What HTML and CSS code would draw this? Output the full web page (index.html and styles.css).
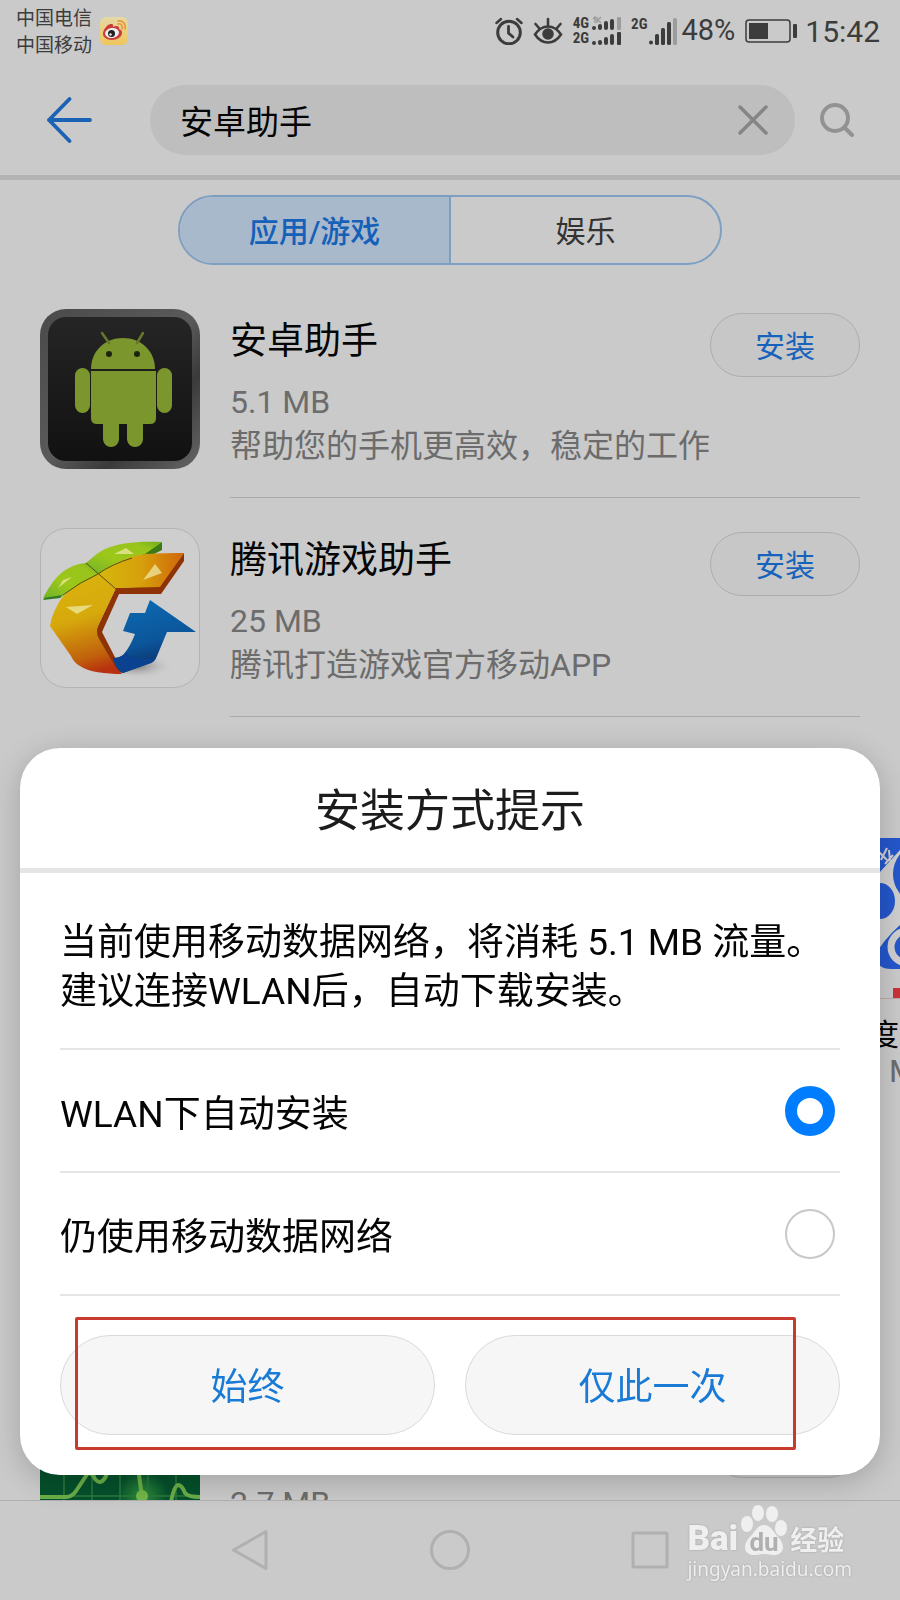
FILE: index.html
```html
<!DOCTYPE html>
<html lang="zh-CN">
<head>
    <meta charset="UTF-8">
    <meta name="viewport" content="width=device-width, initial-scale=1.0">
    <title>安卓助手</title>
    <link rel="stylesheet" href="styles.css">
</head>
<body>

<div class="screen">
    <!-- Status bar -->
    <div class="statusbar">
        <div class="carriers">
            <span>中国电信</span>
            <span>中国移动</span>
        </div>
        <svg class="weibo" width="28" height="28" viewBox="0 0 28 28">
            <defs>
                <linearGradient id="gold" x1="0" y1="0" x2="0" y2="1">
                    <stop offset="0" stop-color="#e6d9a6"/>
                    <stop offset="1" stop-color="#efc65a"/>
                </linearGradient>
            </defs>
            <rect width="28" height="28" rx="6" fill="url(#gold)"/>
            <path d="M3 17C3 12 8 7 11 7C14 7 13 9 13 10C16 8 20 9 19 12C22 13 22 15 22 16C22 20 17 23 12 23C7 23 3 20 3 17Z" fill="#c93c3a"/>
            <ellipse cx="12" cy="16" rx="7" ry="5" fill="#eee" transform="rotate(-8 12 16)"/>
            <circle cx="11.500" cy="16.500" r="3.500" fill="#222"/>
            <circle cx="10.500" cy="17.500" r="1.200" fill="#eee"/>
            <path d="M18 7C21 6 23 9 22 12M18 4C23 3 26 7 25 12" fill="none" stroke="#e39a3c" stroke-width="1.600" stroke-linecap="round"/>
        </svg>
        <div class="indicators">
            <svg width="28" height="28" viewBox="0 0 28 28" fill="none" stroke="#3c3c3c" stroke-width="3" stroke-linecap="round">
                <circle cx="14" cy="15.500" r="11.300"/>
                <path d="M13.500 9.500V16L18 20" stroke-width="2.800"/>
                <path d="M1.500 6L6 2M26.500 6L22 2" stroke-width="2.500"/>
            </svg>
            <svg width="30" height="28" viewBox="0 0 30 28" fill="none" stroke="#3c3c3c" stroke-width="2.600" stroke-linecap="round">
                <path d="M2 17.500C6 11.500 10 9.500 15 9.500S24 11.500 28 17.500C24 23.500 20 25.500 15 25.500S6 23.500 2 17.500Z"/>
                <circle cx="15" cy="17" r="4.500" fill="#3c3c3c"/>
                <path d="M15 2V8M2.500 7L6 11M27.500 7L24 11"/>
            </svg>
            <div class="sim">
                <div class="net"><span>4G</span><span>2G</span></div>
                <svg width="30" height="30" viewBox="0 0 30 30" fill="#3c3c3c">
                    <path d="M2 3L4 1V7M6 1V7M10 1L7 4L10 7" fill="none" stroke="#9c9c9c" stroke-width="1.500"/>
                    <circle cx="3" cy="12" r="2"/>
                    <rect x="7" y="8" width="4" height="6" rx="2"/>
                    <rect x="13" y="5" width="4" height="9" rx="2"/>
                    <rect x="19" y="3" width="4" height="11" rx="2"/>
                    <rect x="26" y="1" width="4" height="13" rx="1" fill="#9c9c9c"/>
                    <circle cx="3" cy="27" r="2"/>
                    <rect x="7" y="24" width="4" height="5" rx="2"/>
                    <rect x="13" y="21" width="4" height="8" rx="2"/>
                    <rect x="19" y="18" width="4" height="11" rx="2"/>
                    <rect x="26" y="16" width="4" height="13" rx="1"/>
                </svg>
            </div>
            <div class="sim second">
                <div class="net"><span>2G</span></div>
                <svg width="28" height="28" viewBox="0 0 28 28" fill="#3c3c3c">
                    <circle cx="2" cy="25.500" r="2"/>
                    <rect x="6" y="17" width="4" height="11" rx="1.500"/>
                    <rect x="12" y="11" width="4" height="17" rx="1.500"/>
                    <rect x="18" y="5" width="4" height="23" rx="1.500"/>
                    <rect x="24" y="1" width="4" height="27" rx="1.500" fill="#9c9c9c"/>
                </svg>
            </div>
            <span class="percent">48%</span>
            <svg class="battery" width="52" height="24" viewBox="0 0 52 24">
                <rect x="1" y="1" width="44" height="22" rx="3" fill="none" stroke="#3c3c3c" stroke-width="1.500"/>
                <rect x="4" y="4" width="19" height="16" fill="#3c3c3c"/>
                <rect x="48" y="5" width="4" height="14" rx="1" fill="#3c3c3c"/>
            </svg>
            <span class="clock">15:42</span>
        </div>
    </div>

    <!-- Search bar -->
    <header class="topbar">
        <button class="icon-btn" aria-label="返回">
            <svg width="45" height="46" viewBox="0 0 45 46" fill="none" stroke="#1a62b5" stroke-width="3.800" stroke-linecap="round" stroke-linejoin="round">
                <path d="M22.500 2L2 23L22.500 44M2 23H43"/>
            </svg>
        </button>
        <div class="search">
            <input type="text" value="安卓助手" aria-label="搜索">
            <button class="icon-btn" aria-label="清除">
                <svg width="30" height="30" viewBox="0 0 30 30" fill="none" stroke="#858585" stroke-width="3.500" stroke-linecap="round">
                    <path d="M2 2L28 28M28 2L2 28"/>
                </svg>
            </button>
        </div>
        <button class="icon-btn" aria-label="搜索">
            <svg width="34" height="34" viewBox="0 0 34 34" fill="none" stroke="#929292" stroke-width="4" stroke-linecap="round">
                <circle cx="15" cy="15" r="13"/>
                <path d="M24.500 24.500L32 32"/>
            </svg>
        </button>
    </header>

    <main class="content">
        <div class="tabs">
            <button class="tab active">应用/游戏</button>
            <button class="tab">娱乐</button>
        </div>

        <article class="app">
            <svg class="app-icon" width="160" height="160" viewBox="0 0 160 160">
                <defs>
                    <linearGradient id="frame" x1="0" y1="0" x2="1" y2="1">
                        <stop offset="0" stop-color="#4a4a4a"/>
                        <stop offset="0.500" stop-color="#5a5a5a"/>
                        <stop offset="0.700" stop-color="#3a3a3a"/>
                        <stop offset="1" stop-color="#666"/>
                    </linearGradient>
                    <linearGradient id="dark" x1="0" y1="0" x2="0" y2="1">
                        <stop offset="0" stop-color="#252525"/>
                        <stop offset="1" stop-color="#111"/>
                    </linearGradient>
                </defs>
                <rect width="160" height="160" rx="26" fill="url(#frame)"/>
                <rect x="8" y="8" width="144" height="144" rx="18" fill="url(#dark)"/>
                <g fill="#7b962c">
                    <path d="M51 60C51 42 65 29 83 29S115 42 115 60Z"/>
                    <path d="M51 62H116V109Q116 115 110 115H57Q51 115 51 109Z"/>
                    <rect x="35" y="59" width="15" height="45" rx="7.500"/>
                    <rect x="117" y="59" width="15" height="45" rx="7.500"/>
                    <path d="M63 110H79V130A8 8 0 0 1 63 130Z"/>
                    <path d="M87 110H103V130A8 8 0 0 1 87 130Z"/>
                </g>
                <path d="M62 24L69 34M103 24L97 34" stroke="#64792a" stroke-width="2.500" stroke-linecap="round"/>
                <circle cx="69" cy="45" r="3" fill="#1c2410"/>
                <circle cx="97" cy="45" r="3" fill="#1c2410"/>
            </svg>
            <div class="app-body">
                <div class="app-text">
                    <h2>安卓助手</h2>
                    <p>5.1 MB</p>
                    <p>帮助您的手机更高效，稳定的工作</p>
                </div>
                <button class="install">安装</button>
            </div>
        </article>

        <article class="app">
            <svg class="app-icon" width="160" height="160" viewBox="0 0 160 160">
                <defs>
                    <linearGradient id="green" x1="0" y1="1" x2="1" y2="0">
                        <stop offset="0" stop-color="#6db32a"/>
                        <stop offset="0.400" stop-color="#9cc71a"/>
                        <stop offset="0.800" stop-color="#98c41c"/>
                        <stop offset="1" stop-color="#6cab1c"/>
                    </linearGradient>
                    <linearGradient id="amber" x1="0" y1="0" x2="1" y2="0">
                        <stop offset="0" stop-color="#d6b80c"/>
                        <stop offset="0.500" stop-color="#d6a00c"/>
                        <stop offset="1" stop-color="#d0660a"/>
                    </linearGradient>
                    <linearGradient id="fire" x1="0.300" y1="0" x2="0.500" y2="1">
                        <stop offset="0" stop-color="#d9b40e"/>
                        <stop offset="0.450" stop-color="#d6a80c"/>
                        <stop offset="0.850" stop-color="#c0600c"/>
                        <stop offset="1" stop-color="#b83210"/>
                    </linearGradient>
                    <linearGradient id="blue" x1="0" y1="0" x2="0.300" y2="1">
                        <stop offset="0" stop-color="#0b6cb4"/>
                        <stop offset="0.650" stop-color="#0c559a"/>
                        <stop offset="1" stop-color="#0a2f68"/>
                    </linearGradient>
                    <radialGradient id="shade">
                        <stop offset="0" stop-color="#777"/>
                        <stop offset="1" stop-color="#cecece" stop-opacity="0"/>
                    </radialGradient>
                </defs>
                <rect x="0.500" y="0.500" width="159" height="159" rx="26" fill="#cecece" stroke="#b2b2b2"/>
                <ellipse cx="96" cy="138" rx="38" ry="13" fill="url(#shade)"/>
                <path d="M3 72L20 70L24 66L5 69Z" fill="#2f7a1c"/>
                <path d="M3 70C8 61 12 54 18 48C26 40 35 36 46 35L58 46L23 67Z" fill="url(#green)"/>
                <path d="M122 14V22L112 27H102Z" fill="#3c7a14"/>
                <path d="M46 35C52 30 56 26 63 22C80 14 100 13 122 14L105 26C92 28 74 35 58 46Z" fill="url(#green)"/>
                <path d="M144 25V33L121 66H79L62 104L81 141L82 145L74 143L57 110V100L76 60L119 58Z" fill="#8e3208"/>
                <path d="M58 46C76 34 92 27 106 26C118 25 132 25 144 25L120 59L76 60Z" fill="url(#amber)"/>
                <path d="M58 46L76 60L58 98Q56 103 58 109L76 140L82 146C66 146 48 144 40 138Q34 135 31 128L10 98Q12 84 23 68Q38 56 58 46Z" fill="url(#fire)"/>
                <path d="M110 72L156 104H127L117 128Q115 134 108 136L83 145Q76 142 73 130Q80 130 84 126Q91 117 95 106L83 103L90 85H105Z" fill="url(#blue)"/>
                <path d="M73 130Q82 130 86 124C91 132 103 132 116 130Q114 135 108 136L83 145Q76 142 73 130Z" fill="#0b4290"/>
                <path d="M46 35L76 61M23 67Q40 54 58 46Q72 36 92 30" fill="none" stroke="#5c4a08" stroke-width="1"/>
                <g fill="#eee8a0" fill-opacity="0.750">
                    <path d="M74 26L86 20L94 26Z"/>
                    <path d="M18 60L23 52L32 49Z"/>
                    <path d="M26 79L53 77L37 86Z"/>
                    <path d="M103 52L115 36L122 45Z"/>
                </g>
            </svg>
            <div class="app-body">
                <div class="app-text">
                    <h2>腾讯游戏助手</h2>
                    <p>25 MB</p>
                    <p>腾讯打造游戏官方移动APP</p>
                </div>
                <button class="install">安装</button>
            </div>
        </article>

        <!-- Horizontal strip, runs off the right edge -->
        <section class="strip">
            <div class="card">
                <svg width="131" height="131" viewBox="0 0 131 131">
                    <rect width="131" height="131" rx="22" fill="#cfcfcf"/>
                    <path d="M0 0H42L0 46Z" fill="#2456cc"/>
                    <path d="M10 14L18 22M12 22L18 10M16 26L24 17M20 12L21 23" stroke="#cfcfcf" stroke-width="2"/>
                    <ellipse cx="11" cy="63" rx="15" ry="18" fill="#2456cc"/>
                    <ellipse cx="45" cy="36" rx="21" ry="26" fill="#2456cc"/>
                    <path d="M60 62Q42 74 32 86Q12 104 6 118Q8 131 22 131H131V62Z" fill="#2456cc"/>
                    <circle cx="38" cy="109" r="16" fill="none" stroke="#cfcfcf" stroke-width="7"/>
                </svg>
                <div class="badge"></div>
                <h3>度</h3>
                <p>M</p>
            </div>
        </section>

        <article class="app">
            <svg class="app-icon" width="160" height="160" viewBox="0 0 160 160">
                <defs>
                    <radialGradient id="glow" cx="0.640" cy="0.540" r="0.160">
                        <stop offset="0" stop-color="#2f8f3a"/>
                        <stop offset="1" stop-color="#05502c"/>
                    </radialGradient>
                </defs>
                <rect width="160" height="160" fill="url(#glow)"/>
                <path d="M24 0V160M52 0V160M80 0V160M108 0V160M136 0V160M0 86H160" stroke="#2c7a3e" stroke-width="1.500"/>
                <path d="M0 87H26Q32 87 36 81L48 63Q52 62 55 69Q61 76 66 66L72 50M97 50L102 87M131 92Q134 76 138 75Q142 75 145 83Q148 87 160 87" fill="none" stroke="#6aae48" stroke-width="4"/>
                <circle cx="102" cy="86" r="6" fill="#74b648"/>
            </svg>
            <div class="app-body">
                <div class="app-text">
                    <h2>&nbsp;</h2>
                    <p>2.7 MB</p>
                </div>
                <button class="install" aria-label="安装"></button>
            </div>
        </article>
    </main>

    <!-- System navigation -->
    <nav class="navbar">
        <button class="icon-btn" aria-label="后退">
            <svg width="40" height="42" viewBox="0 0 40 42" fill="none" stroke="#b0b0b0" stroke-width="3" stroke-linejoin="round">
                <path d="M3.500 21L36 2.500V39.500Z"/>
            </svg>
        </button>
        <button class="icon-btn" aria-label="主页">
            <svg width="40" height="42" viewBox="0 0 40 42" fill="none" stroke="#b0b0b0" stroke-width="3">
                <circle cx="20" cy="21" r="18.500"/>
            </svg>
        </button>
        <button class="icon-btn" aria-label="最近任务">
            <svg width="40" height="42" viewBox="0 0 40 42" fill="none" stroke="#b0b0b0" stroke-width="3" stroke-linejoin="round">
                <rect x="3" y="4" width="34" height="34" rx="1"/>
            </svg>
        </button>
    </nav>
</div>

<!-- Dialog -->
<div class="overlay">
    <form class="dialog" role="dialog" aria-labelledby="dialog-title">
        <h1 id="dialog-title">安装方式提示</h1>
        <div class="dialog-body">
            <p class="message">当前使用移动数据网络，将消耗 5.1 MB 流量。<br>建议连接WLAN后，自动下载安装。</p>
            <label class="option" for="wlan">
                WLAN下自动安装
                <input type="radio" id="wlan" name="network" checked>
            </label>
            <label class="option" for="mobile">
                仍使用移动数据网络
                <input type="radio" id="mobile" name="network">
            </label>
            <div class="actions">
                <button type="button">始终</button>
                <button type="button">仅此一次</button>
                <div class="highlight"></div>
            </div>
        </div>
    </form>
</div>

<div class="watermark">
    <div class="brand">
        <span class="bai">Bai</span>
        <svg width="48" height="52" viewBox="0 0 48 52" fill="#efefef">
            <ellipse cx="7" cy="20" rx="6" ry="8"/>
            <ellipse cx="18" cy="9" rx="6" ry="8"/>
            <ellipse cx="32" cy="10" rx="6" ry="8"/>
            <ellipse cx="41" cy="24" rx="6" ry="8"/>
            <path d="M24 21C31 21 33 28 38 33C46 41 44 51 34 51C29 51 28 50 24 50S19 51 14 51C4 51 2 41 10 33C15 28 17 21 24 21Z"/>
            <text class="du" x="24" y="47" text-anchor="middle">du</text>
        </svg>
        <span class="jingyan">经验</span>
    </div>
    <div class="site">jingyan.baidu.com</div>
</div>

</body>
</html>
```

FILE: styles.css
```css
* {
    box-sizing: border-box;
}
body {
    margin: 0;
    font-family: Roboto, "Noto Sans CJK SC", sans-serif;
    background-color: #cacaca;
    color: #050505;
}
h1, h2, h3, p {
    margin: 0;
    font-weight: normal;
}
button {
    font-family: inherit;
    cursor: pointer;
}
svg {
    display: block;
    flex: none;
}
.screen {
    display: flex;
    flex-direction: column;
    height: 100vh;
    overflow: hidden;
}
.icon-btn {
    padding: 0;
    border: none;
    background: none;
}

/* Status bar */
.statusbar {
    display: flex;
    align-items: center;
    height: 62px;
    padding: 0 20px 0 16px;
    color: #3c3c3c;
}
.carriers {
    display: flex;
    flex-direction: column;
    padding-top: 2px;
    font-size: 19px;
    line-height: 27px;
}
.weibo {
    margin-left: 8px;
}
.indicators {
    display: flex;
    align-items: center;
    gap: 10px;
    margin-left: auto;
}
.sim {
    display: flex;
    align-items: center;
    gap: 2px;
}
.net {
    display: flex;
    flex-direction: column;
    font-family: "Roboto Condensed", "Liberation Sans Narrow", Roboto, sans-serif;
    font-size: 15px;
    font-weight: bold;
    line-height: 15px;
}
.second .net {
    align-self: flex-start;
}
.percent {
    margin-left: -6px;
    padding-bottom: 3px;
    font-size: 29px;
}
.battery {
    margin-right: -2px;
}
.clock {
    font-size: 30px;
}

/* Search bar */
.topbar {
    display: flex;
    align-items: center;
    padding: 23px 46px 20px 47px;
    border-bottom: 5px solid #b3b3b3;
}
.search {
    flex: 1;
    display: flex;
    align-items: center;
    height: 70px;
    margin: 0 25px 0 58px;
    padding: 0 27px 0 30px;
    border-radius: 35px;
    background-color: #bebebe;
}
.search input {
    flex: 1;
    min-width: 0;
    padding: 0;
    border: none;
    outline: none;
    background: none;
    font-family: inherit;
    font-size: 33px;
    color: #050505;
}

/* Results */
.content {
    flex: 1;
    min-height: 0;
    overflow: hidden;
}
.tabs {
    display: flex;
    width: 544px;
    max-width: 100%;
    height: 70px;
    margin: 15px auto 14px;
    border: 2px solid #7d9fc2;
    border-radius: 35px;
    overflow: hidden;
}
.tab {
    flex: 1;
    padding: 0 0 2px;
    border: none;
    background: none;
    font-size: 30px;
    color: #333;
}
.tab.active {
    border-right: 2px solid #7d9fc2;
    background-color: #a9b9cc;
    color: #1560b8;
    font-weight: 500;
}
.app {
    display: flex;
    gap: 30px;
    padding: 30px 40px 0;
}
.app-body {
    flex: 1;
    display: flex;
    align-items: flex-start;
    padding-bottom: 29px;
    border-bottom: 1px solid #aaa;
}
.app-text {
    flex: 1;
    font-size: 32px;
    line-height: 44px;
    color: #6c6c6c;
}
.app-text h2 {
    padding-top: 5px;
    margin-bottom: 10px;
    font-size: 37px;
    line-height: 56px;
    color: #050505;
}
.install {
    width: 150px;
    height: 64px;
    margin-top: 4px;
    margin-left: -150px;
    padding: 0 0 3px;
    border: 1px solid #adadad;
    border-radius: 32px;
    background-color: #c7c7c7;
    font-size: 30px;
    color: #1763bb;
}
.strip {
    display: flex;
    justify-content: flex-end;
    margin-right: -100px;
    padding: 121px 0 289px;
}
.card {
    width: 131px;
}
.badge {
    height: 30px;
    border-bottom: 1px solid #bda9a9;
    background: linear-gradient(#c9343a, #c9343a) 24px bottom / 100px 10px no-repeat;
}
.card h3 {
    margin-top: 16px;
    font-size: 30px;
    line-height: 40px;
}
.card p {
    padding-left: 20px;
    font-size: 32px;
    line-height: 32px;
    margin-bottom: 4px;
    color: #6c6c6c;
}

/* System navigation */
.navbar {
    display: flex;
    justify-content: center;
    align-items: center;
    gap: 160px;
    height: 100px;
    padding-bottom: 2px;
    border-top: 1px solid #b0b0b0;
}

/* Dialog */
.overlay {
    position: fixed;
    inset: 0;
    display: flex;
    align-items: flex-end;
    padding: 0 20px 125px;
}
.dialog {
    flex: 1;
    border-radius: 40px;
    background-color: #fff;
    box-shadow: 0 6px 30px rgba(0, 0, 0, 0.2);
}
.dialog h1 {
    padding-top: 8px;
    border-bottom: 5px solid #e5e5e5;
    font-size: 45px;
    line-height: 112px;
    text-align: center;
    color: #1c1c1c;
}
.dialog-body {
    padding: 0 40px 40px;
    font-size: 37px;
}
.message {
    padding: 45px 0 32px;
    border-bottom: 2px solid #e5e5e5;
    line-height: 49px;
}
.option {
    display: flex;
    align-items: center;
    justify-content: space-between;
    height: 123px;
    padding-right: 5px;
    border-bottom: 2px solid #e5e5e5;
}
.option input {
    appearance: none;
    width: 50px;
    height: 50px;
    margin: 0;
    border: 2px solid #c8c8c8;
    border-radius: 50%;
}
.option input:checked {
    border: 12px solid #007dfe;
}
.actions {
    position: relative;
    display: flex;
    gap: 30px;
    margin-top: 39px;
}
.actions button {
    flex: 1;
    height: 100px;
    padding: 0 0 2px;
    border: 1px solid #dadada;
    border-radius: 50px;
    background-color: #f6f6f6;
    font-size: 37px;
    color: #1a7bd6;
}
.highlight {
    position: absolute;
    top: -18px;
    right: 44px;
    bottom: -15px;
    left: 15px;
    border: 3px solid #c93a2e;
    border-radius: 2px;
    pointer-events: none;
}

/* Watermark */
.watermark {
    position: fixed;
    right: 48px;
    bottom: 18px;
    color: #efefef;
    text-shadow: 0 0 2px #999;
}
.brand {
    display: flex;
    align-items: flex-end;
    gap: 2px;
}
.bai {
    font-size: 35px;
    font-weight: 900;
    line-height: 34px;
}
.du {
    font-size: 26px;
    font-weight: bold;
    fill: #b0b0b0;
    text-shadow: none;
}
.jingyan {
    font-size: 27px;
    font-weight: bold;
    line-height: 30px;
}
.site {
    font-family: "Noto Sans", sans-serif;
    font-size: 19px;
    line-height: 26px;
}
```
